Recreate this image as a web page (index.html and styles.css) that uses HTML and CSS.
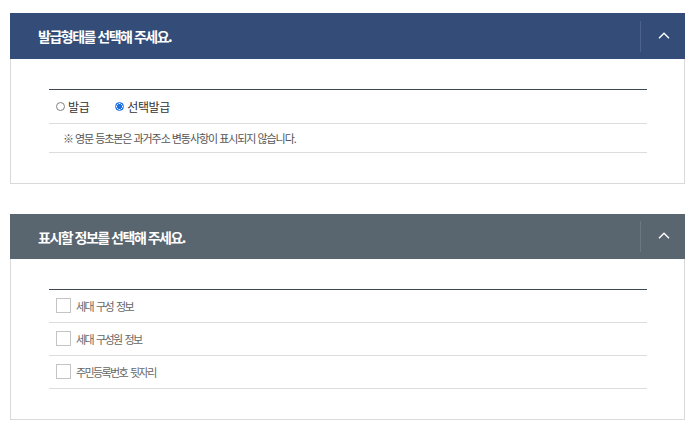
FILE: index.html
```html
<!DOCTYPE html>
<html lang="ko">
<head>
<meta charset="utf-8">
<title>발급형태 선택</title>
<link rel="stylesheet" href="styles.css">
</head>
<body>
<div class="page">
  <section class="panel">
    <div class="panel-head head-blue">
      <h2 class="panel-title">발급형태를 선택해 주세요.</h2>
      <button class="toggle" type="button" aria-label="접기">
        <svg width="12" height="7" viewBox="0 0 12 7"><path d="M1 6.2 L6 1.2 L11 6.2" fill="none" stroke="#fff" stroke-width="1.4"/></svg>
      </button>
    </div>
    <div class="panel-body">
      <div class="table">
        <div class="row row-radio">
          <label class="radio"><input type="radio" name="type"><span>발급</span></label>
          <label class="radio radio-2"><input type="radio" name="type" checked><span>선택발급</span></label>
        </div>
        <div class="row row-note">※ 영문 등초본은 과거주소 변동사항이 표시되지 않습니다.</div>
      </div>
    </div>
  </section>

  <section class="panel">
    <div class="panel-head head-gray">
      <h2 class="panel-title">표시할 정보를 선택해 주세요.</h2>
      <button class="toggle" type="button" aria-label="접기">
        <svg width="12" height="7" viewBox="0 0 12 7"><path d="M1 6.2 L6 1.2 L11 6.2" fill="none" stroke="#fff" stroke-width="1.4"/></svg>
      </button>
    </div>
    <div class="panel-body">
      <div class="table">
        <label class="row row-check"><input type="checkbox"><span>세대 구성 정보</span></label>
        <label class="row row-check"><input type="checkbox"><span>세대 구성원 정보</span></label>
        <label class="row row-check"><input type="checkbox"><span>주민등록번호 뒷자리</span></label>
      </div>
    </div>
  </section>
</div>
</body>
</html>
```

FILE: styles.css
```css
* { box-sizing: border-box; }
html, body { margin: 0; padding: 0; background: #fff; }
body {
  font-family: "Noto Sans CJK KR", "Noto Sans", sans-serif;
  color: #333;
}
.page {
  padding: 13px 14px 0 10px;
  display: flex;
  flex-direction: column;
  gap: 30px;
}
.panel { display: flex; flex-direction: column; }
.panel-head {
  height: 46px;
  display: flex;
  align-items: center;
  justify-content: space-between;
  padding-left: 28px;
}
.head-blue { background: #344c78; }
.head-blue .toggle { border-left-color: #4d6290; }
.head-gray { background: #59656f; height: 45px; }
.head-gray .toggle { border-left-color: #6d7882; }
.panel-title {
  margin: 0;
  font-size: 14px;
  font-weight: 700;
  color: #fff;
  letter-spacing: -1.5px;
}
.toggle {
  width: 45px;
  height: 31px;
  border: 0;
  border-left: 1px solid;
  background: transparent;
  padding: 0;
  display: flex;
  align-items: center;
  justify-content: center;
}
.toggle svg { display: block; margin-left: 1px; margin-top: -2px; }
.panel-body {
  border: 1px solid #d9d9d9;
  border-top: 0;
  padding: 30px 37px 30px 38px;
}
.table { border-top: 1px solid #3c4858; display: flex; flex-direction: column; }
.row { border-bottom: 1px solid #dcdcdc; display: flex; align-items: center; }
.row-radio { height: 34px; padding-left: 7px; }
.radio {
  display: flex; align-items: center;
  font-size: 12px; letter-spacing: -0.4px; color: #333;
}
.radio-2 { margin-left: 26px; }
.radio input {
  appearance: none; -webkit-appearance: none;
  width: 9px; height: 9px; margin: 0 3px 0 0;
  border: 1px solid #808080; border-radius: 50%; background: #fff;
}
.radio input:checked {
  border-color: #1a6fe6;
  background: radial-gradient(circle, #1a6fe6 0 2.4px, #fff 2.9px 3px, #1a6fe6 3.4px);
}
.row-note {
  height: 29px; padding-left: 14px;
  font-size: 11px; letter-spacing: -1.05px; color: #555;
}
.row-check { height: 33px; padding-left: 7px; cursor: pointer; }
.row-check input {
  appearance: none; -webkit-appearance: none;
  width: 15px; height: 15px; margin: -1px 5px 0 0;
  border: 1px solid #c4c4c4; background: #fff; border-radius: 0;
}
.row-check span { font-size: 11px; letter-spacing: -1.6px; word-spacing: 1.5px; color: #666; }
```
